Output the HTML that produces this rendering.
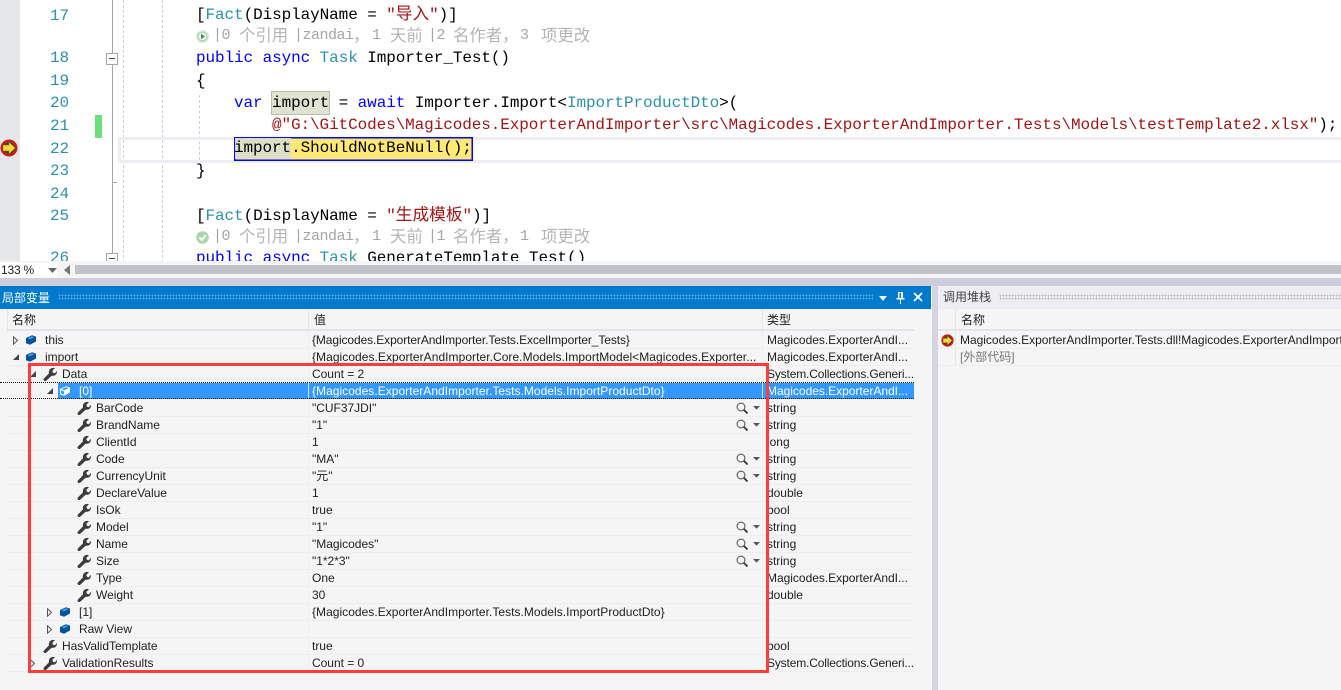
<!DOCTYPE html>
<html><head><meta charset="utf-8"><style>
html,body{margin:0;padding:0;width:1341px;height:690px;overflow:hidden;background:#f5f5f5}
body{position:relative;font-family:"Liberation Sans","Noto Sans CJK SC",sans-serif;font-size:12px;color:#1e1e1e}
div,span.a,svg.a{position:absolute}
#ed{left:0;top:0;width:1341px;height:263px;background:#fff;overflow:hidden;font-family:"Liberation Mono","Noto Sans CJK SC",monospace;font-size:16px;letter-spacing:-.09px;color:#000}
.n{left:50px;color:#2b91af;height:22px;line-height:22px;white-space:pre}
.c{height:22px;line-height:22px;white-space:pre}
.k{color:#00f}.t{color:#2b91af}.s{color:#a31515}.j{font-size:16.7px;letter-spacing:0}
.l{color:#a5a5a5;font-size:15px;letter-spacing:-.5px;height:20px;line-height:20px;white-space:pre}
.j2{font-size:16.4px;letter-spacing:0;color:#b5b5b5}
.r{left:7px;width:907px;height:17px;border-bottom:1px solid #eeeeee;box-sizing:border-box}
.x{height:17px;line-height:16px;white-space:pre;letter-spacing:-.02px}
.v{left:312px}.y{left:767px}
.sep{width:1px;background:#e6e6ea}
</style></head><body>
<svg width="0" height="0" style="position:absolute"><defs>
<symbol id="w" viewBox="0 0 14 14"><path fill="#3c3c3c" d="M.8 11.6 6 6.4C5.4 4 6.8.9 10.2.9c.7 0 1.2.1 1.7.4L9.3 3.9l.7 1.8 1.8.7 2.1-2.5c.5 3.200-2 5.400-5.300 4.800L3.200 13.700c-.6.600-1.500.500-2.100 0-.7-.6-.8-1.500-.3-2.100z"/></symbol>
<symbol id="b" viewBox="0 0 12 12"><path fill="#00539c" d="M1 4 7 1.200 11 2.600V7.500L5 10.800 1 9.200z"/><path fill="#5a9bd0" d="M2.600 4.300 7 2.300 9.500 3.100 5 5.200z"/></symbol>
<symbol id="bs" viewBox="0 0 12 12"><path fill="#fff" d="M1 4 7 1.200 11 2.600V7.500L5 10.800 1 9.200z"/><path fill="#3399ff" d="M2 5.300 5 6.500V9.500L2 8.400zM2.600 4.100 7 2.200 9.600 3.100 5 5.300z"/></symbol>
<symbol id="m" viewBox="0 0 25 12"><circle cx="5" cy="5" r="3.900" fill="none" stroke="#666" stroke-width="1.200"/><path d="M7.800 7.800 11.500 11.500" stroke="#333" stroke-width="1.800"/><path d="M17 4h7l-3.500 3.600z" fill="#555"/></symbol>
<symbol id="o" viewBox="0 0 7 9"><path d="M1.500 .8 5.500 4.500 1.500 8.200z" fill="#f5f5f5" stroke="#555"/></symbol>
<symbol id="d" viewBox="0 0 8 8"><path d="M7 1V7H1z" fill="#444"/></symbol>
<symbol id="bp" viewBox="0 0 18 18"><circle cx="9" cy="9" r="8.500" fill="#d81818"/><circle cx="9" cy="9" r="6.500" fill="#6d3a20"/><path d="M2.800 6H8.800V2.800L15.500 9 8.800 15.200V12H2.800z" fill="#f6d838" stroke="#6a5518" stroke-width=".6"/></symbol>
</defs></svg>

<div id="ed">
<div style="left:0;top:0;width:20px;height:263px;background:#e6e7e8"></div>
<div style="left:95px;top:115px;width:7px;height:23px;background:#6be07a"></div>
<div style="left:112px;top:0;width:1px;height:263px;background:#a5a5a5"></div>
<div style="left:112px;top:182px;width:5px;height:1px;background:#a5a5a5"></div>
<div style="left:123px;top:0;height:263px;width:0;border-left:1px dashed #d0d0d0"></div>
<div style="left:162px;top:0;height:263px;width:0;border-left:1px dashed #d0d0d0"></div>
<div style="left:199px;top:95px;height:65px;width:0;border-left:1px dashed #d0d0d0"></div>
<div style="left:106px;top:53px;width:10px;height:10px;border:1px solid #a5a5a5;background:#fff"><div style="left:2px;top:4px;width:6px;height:1px;background:#444"></div></div>
<div style="left:106px;top:253px;width:10px;height:10px;border:1px solid #a5a5a5;background:#fff"><div style="left:2px;top:4px;width:6px;height:1px;background:#444"></div></div>
<div style="left:118px;top:137px;width:1223px;height:20px;border:3px solid #eeeef2;border-right:0"></div>
<div style="left:271px;top:91px;width:57px;height:22px;background:#dfe3d0;border:1px solid #b8bca8"></div>
<div style="left:234px;top:137px;width:237px;height:22px;background:#fee972;border:1px solid #0000ff;box-shadow:inset 0 0 0 .5px #0000ff"></div>
<div style="left:235px;top:138px;width:56px;height:21px;background:#dcdfc5"></div>
<svg class="a" style="left:0;top:139px" width="18" height="18"><use href="#bp"/></svg>

<div class="n" style="top:5px">17</div>
<div class="n" style="top:47px">18</div>
<div class="n" style="top:70px">19</div>
<div class="n" style="top:92px">20</div>
<div class="n" style="top:115px">21</div>
<div class="n" style="top:138px">22</div>
<div class="n" style="top:160px">23</div>
<div class="n" style="top:183px">24</div>
<div class="n" style="top:205px">25</div>
<div class="n" style="top:247px">26</div>

<div class="c" style="left:196px;top:4px">[<span class="t">Fact</span>(DisplayName = <span class="s">"<span class="j">导入</span>"</span>)]</div>
<svg class="a" style="left:196px;top:30px" width="13" height="13"><circle cx="6.500" cy="6.500" r="6.300" fill="#cfe5d3"/><circle cx="6.500" cy="6.500" r="4.300" fill="#fff" stroke="#a9cdb0"/><path d="M5 3.600 9.200 6.500 5 9.400z" fill="#3f9a52"/></svg>
<span class="a l" style="left:213px;top:26px">|0</span><span class="a l j2" style="left:239px;top:27px">个引用</span><span class="a l" style="left:294px;top:26px">|zandai</span><span class="a l j2" style="left:353px;top:27px">，</span><span class="a l" style="left:372px;top:26px">1</span><span class="a l j2" style="left:390px;top:27px">天前</span><span class="a l" style="left:428px;top:26px">|2</span><span class="a l j2" style="left:453px;top:27px">名作者，</span><span class="a l" style="left:520px;top:26px">3</span><span class="a l j2" style="left:541px;top:27px">项更改</span>
<div class="c" style="left:196px;top:47px"><span class="k">public</span> <span class="k">async</span> <span class="t">Task</span> Importer_Test()</div>
<div class="c" style="left:196px;top:70px">{</div>
<div class="c" style="left:234px;top:92px"><span class="k">var</span> import = <span class="k">await</span> Importer.Import&lt;<span class="t">ImportProductDto</span>&gt;(</div>
<div class="c s" style="left:272px;top:114px">@"G:\GitCodes\Magicodes.ExporterAndImporter\src\Magicodes.ExporterAndImporter.Tests\Models\testTemplate2.xlsx"<span style="color:#000">);</span></div>
<div class="c" style="left:234px;top:137px">import.ShouldNotBeNull();</div>
<div class="c" style="left:196px;top:160px">}</div>
<div class="c" style="left:196px;top:205px">[<span class="t">Fact</span>(DisplayName = <span class="s">"<span class="j">生成模板</span>"</span>)]</div>
<svg class="a" style="left:196px;top:231px" width="13" height="13"><circle cx="6.500" cy="6.500" r="6.300" fill="#a9d6ad"/><path d="M3.500 6.500 5.800 9 9.800 4.200" fill="none" stroke="#fff" stroke-width="1.800"/></svg>
<span class="a l" style="left:213px;top:227px">|0</span><span class="a l j2" style="left:239px;top:228px">个引用</span><span class="a l" style="left:294px;top:227px">|zandai</span><span class="a l j2" style="left:353px;top:228px">，</span><span class="a l" style="left:372px;top:227px">1</span><span class="a l j2" style="left:390px;top:228px">天前</span><span class="a l" style="left:428px;top:227px">|1</span><span class="a l j2" style="left:453px;top:228px">名作者，</span><span class="a l" style="left:520px;top:227px">1</span><span class="a l j2" style="left:541px;top:228px">项更改</span>
<div class="c" style="left:196px;top:247px"><span class="k">public</span> <span class="k">async</span> <span class="t">Task</span> GenerateTemplate_Test()</div>
</div>

<!-- scrollbar -->
<div style="left:0;top:261px;width:1341px;height:17px;background:#f5f5f5"></div>
<div style="left:0;top:263px;width:57px;height:15px;background:#fff"></div>
<div class="x" style="left:1px;top:262px;height:16px;line-height:17px;letter-spacing:-.2px">133 %</div>
<svg class="a" style="left:48px;top:268px" width="9" height="5"><path d="M0 0h9L4.500 5z" fill="#666"/></svg>
<svg class="a" style="left:64px;top:265px" width="6" height="10"><path d="M6 0V10L0 5z" fill="#777"/></svg>
<div style="left:75px;top:265px;width:1266px;height:9px;background:#c2c3c9"></div>
<div style="left:0;top:278px;width:1341px;height:8px;background:#cccedb"></div>

<!-- locals panel -->
<div style="left:0;top:286px;width:931px;height:404px;background:#f5f5f5"></div>
<div style="left:0;top:286px;width:931px;height:23px;background:#007acc"></div>
<div style="left:2px;top:287px;height:23px;line-height:23px;color:#fff;font-size:12px;white-space:pre">局部变量</div>
<div style="left:58px;top:294px;width:815px;height:6px;background-image:radial-gradient(circle,#5aa9de .9px,transparent 1px);background-size:3px 3px"></div>
<svg class="a" style="left:878px;top:296px" width="10" height="5"><path d="M1 0h8L5 5z" fill="#fff"/></svg>
<svg class="a" style="left:896px;top:291px" width="9" height="13"><path d="M2 1h5v6h1.500v1.500H5V13H4V8.500H.5V7H2zM3.500 2v5H5V2z" fill="#fff"/></svg>
<svg class="a" style="left:913px;top:292px" width="10" height="10"><path d="M1 1 9 9M9 1 1 9" stroke="#fff" stroke-width="1.800"/></svg>

<!-- header -->
<div style="left:7px;top:329px;width:907px;height:2px;background:#e3e4ea"></div>
<div class="sep" style="left:7px;top:309px;height:21px"></div>
<div class="sep" style="left:308px;top:309px;height:21px"></div>
<div class="sep" style="left:762px;top:309px;height:21px"></div>
<div class="x" style="left:12px;top:312px">名称</div>
<div class="x" style="left:314px;top:312px">值</div>
<div class="x" style="left:767px;top:312px">类型</div>
<div class="sep" style="left:308px;top:331px;height:339px;background:#eeeeee"></div>
<div class="sep" style="left:762px;top:331px;height:339px;background:#eeeeee"></div>

<!-- row lines -->
<div class="r" style="top:332px"></div><div class="r" style="top:349px"></div><div class="r" style="top:366px"></div><div class="r" style="top:400px"></div><div class="r" style="top:417px"></div><div class="r" style="top:434px"></div><div class="r" style="top:451px"></div><div class="r" style="top:468px"></div><div class="r" style="top:485px"></div><div class="r" style="top:502px"></div><div class="r" style="top:519px"></div><div class="r" style="top:536px"></div><div class="r" style="top:553px"></div><div class="r" style="top:570px"></div><div class="r" style="top:587px"></div><div class="r" style="top:604px"></div><div class="r" style="top:621px"></div><div class="r" style="top:638px"></div><div class="r" style="top:655px"></div>

<!-- selected -->
<div style="left:58px;top:383px;width:856px;height:16px;background:#3399ff"></div>
<div style="left:0;top:382px;width:914px;height:0;border-top:1px dotted #111"></div>
<div style="left:0;top:398px;width:914px;height:0;border-top:1px dotted #111"></div>
<div style="left:308px;top:383px;width:1px;height:15px;background:#cfe5ff"></div>
<div style="left:762px;top:383px;width:1px;height:15px;background:#cfe5ff"></div>

<!-- arrows and icons -->
<svg class="a" style="left:12px;top:336px" width="7" height="9"><use href="#o"/></svg>
<svg class="a" style="left:12px;top:353px" width="8" height="8"><use href="#d"/></svg>
<svg class="a" style="left:29px;top:370px" width="8" height="8"><use href="#d"/></svg>
<svg class="a" style="left:46px;top:387px" width="8" height="8"><use href="#d"/></svg>
<svg class="a" style="left:46px;top:608px" width="7" height="9"><use href="#o"/></svg>
<svg class="a" style="left:46px;top:625px" width="7" height="9"><use href="#o"/></svg>
<svg class="a" style="left:29px;top:659px" width="7" height="9"><use href="#o"/></svg>
<svg class="a" style="left:25px;top:334px" width="12" height="12"><use href="#b"/></svg>
<svg class="a" style="left:25px;top:351px" width="12" height="12"><use href="#b"/></svg>
<svg class="a" style="left:59px;top:385px" width="12" height="12"><use href="#bs"/></svg>
<svg class="a" style="left:59px;top:606px" width="12" height="12"><use href="#b"/></svg>
<svg class="a" style="left:59px;top:623px" width="12" height="12"><use href="#b"/></svg>
<svg class="a" style="left:43px;top:367px" width="14" height="14"><use href="#w"/></svg>
<svg class="a" style="left:43px;top:639px" width="14" height="14"><use href="#w"/></svg>
<svg class="a" style="left:43px;top:656px" width="14" height="14"><use href="#w"/></svg>
<svg class="a" style="left:77px;top:401px" width="14" height="14"><use href="#w"/></svg>
<svg class="a" style="left:77px;top:418px" width="14" height="14"><use href="#w"/></svg>
<svg class="a" style="left:77px;top:435px" width="14" height="14"><use href="#w"/></svg>
<svg class="a" style="left:77px;top:452px" width="14" height="14"><use href="#w"/></svg>
<svg class="a" style="left:77px;top:469px" width="14" height="14"><use href="#w"/></svg>
<svg class="a" style="left:77px;top:486px" width="14" height="14"><use href="#w"/></svg>
<svg class="a" style="left:77px;top:503px" width="14" height="14"><use href="#w"/></svg>
<svg class="a" style="left:77px;top:520px" width="14" height="14"><use href="#w"/></svg>
<svg class="a" style="left:77px;top:537px" width="14" height="14"><use href="#w"/></svg>
<svg class="a" style="left:77px;top:554px" width="14" height="14"><use href="#w"/></svg>
<svg class="a" style="left:77px;top:571px" width="14" height="14"><use href="#w"/></svg>
<svg class="a" style="left:77px;top:588px" width="14" height="14"><use href="#w"/></svg>
<svg class="a" style="left:736px;top:402px" width="25" height="12"><use href="#m"/></svg>
<svg class="a" style="left:736px;top:419px" width="25" height="12"><use href="#m"/></svg>
<svg class="a" style="left:736px;top:453px" width="25" height="12"><use href="#m"/></svg>
<svg class="a" style="left:736px;top:470px" width="25" height="12"><use href="#m"/></svg>
<svg class="a" style="left:736px;top:521px" width="25" height="12"><use href="#m"/></svg>
<svg class="a" style="left:736px;top:538px" width="25" height="12"><use href="#m"/></svg>
<svg class="a" style="left:736px;top:555px" width="25" height="12"><use href="#m"/></svg>

<!-- names -->
<div class="x" style="left:45px;top:332px">this</div>
<div class="x" style="left:45px;top:349px">import</div>
<div class="x" style="left:62px;top:366px">Data</div>
<div class="x" style="left:79px;top:383px;color:#fff">[0]</div>
<div class="x" style="left:96px;top:400px">BarCode</div>
<div class="x" style="left:96px;top:417px">BrandName</div>
<div class="x" style="left:96px;top:434px">ClientId</div>
<div class="x" style="left:96px;top:451px">Code</div>
<div class="x" style="left:96px;top:468px">CurrencyUnit</div>
<div class="x" style="left:96px;top:485px">DeclareValue</div>
<div class="x" style="left:96px;top:502px">IsOk</div>
<div class="x" style="left:96px;top:519px">Model</div>
<div class="x" style="left:96px;top:536px">Name</div>
<div class="x" style="left:96px;top:553px">Size</div>
<div class="x" style="left:96px;top:570px">Type</div>
<div class="x" style="left:96px;top:587px">Weight</div>
<div class="x" style="left:79px;top:604px">[1]</div>
<div class="x" style="left:79px;top:621px">Raw View</div>
<div class="x" style="left:62px;top:638px">HasValidTemplate</div>
<div class="x" style="left:62px;top:655px">ValidationResults</div>

<!-- values -->
<div class="x v" style="top:332px;letter-spacing:-.1px">{Magicodes.ExporterAndImporter.Tests.ExcelImporter_Tests}</div>
<div class="x v" style="top:349px;letter-spacing:.05px">{Magicodes.ExporterAndImporter.Core.Models.ImportModel&lt;Magicodes.Exporter...</div>
<div class="x v" style="top:366px">Count = 2</div>
<div class="x v" style="top:383px;color:#fff;letter-spacing:.03px">{Magicodes.ExporterAndImporter.Tests.Models.ImportProductDto}</div>
<div class="x v" style="top:400px">"CUF37JDI"</div>
<div class="x v" style="top:417px">"1"</div>
<div class="x v" style="top:434px">1</div>
<div class="x v" style="top:451px">"MA"</div>
<div class="x v" style="top:468px">"元"</div>
<div class="x v" style="top:485px">1</div>
<div class="x v" style="top:502px">true</div>
<div class="x v" style="top:519px">"1"</div>
<div class="x v" style="top:536px">"Magicodes"</div>
<div class="x v" style="top:553px">"1*2*3"</div>
<div class="x v" style="top:570px">One</div>
<div class="x v" style="top:587px">30</div>
<div class="x v" style="top:604px;letter-spacing:.03px">{Magicodes.ExporterAndImporter.Tests.Models.ImportProductDto}</div>
<div class="x v" style="top:638px">true</div>
<div class="x v" style="top:655px">Count = 0</div>

<!-- types -->
<div class="x y" style="top:332px">Magicodes.ExporterAndI...</div>
<div class="x y" style="top:349px">Magicodes.ExporterAndI...</div>
<div class="x y" style="top:366px;letter-spacing:-.16px">System.Collections.Generi...</div>
<div class="x y" style="top:383px;color:#fff">Magicodes.ExporterAndI...</div>
<div class="x y" style="top:400px">string</div>
<div class="x y" style="top:417px">string</div>
<div class="x y" style="top:434px">long</div>
<div class="x y" style="top:451px">string</div>
<div class="x y" style="top:468px">string</div>
<div class="x y" style="top:485px">double</div>
<div class="x y" style="top:502px">bool</div>
<div class="x y" style="top:519px">string</div>
<div class="x y" style="top:536px">string</div>
<div class="x y" style="top:553px">string</div>
<div class="x y" style="top:570px">Magicodes.ExporterAndI...</div>
<div class="x y" style="top:587px">double</div>
<div class="x y" style="top:638px">bool</div>
<div class="x y" style="top:655px;letter-spacing:-.16px">System.Collections.Generi...</div>

<!-- red box -->
<div style="left:28px;top:363px;width:735px;height:304px;border:3px solid #ff3b3b"></div>

<!-- splitter + call stack -->
<div style="left:931px;top:286px;width:1px;height:404px;background:#f5f5f5"></div>
<div style="left:932px;top:286px;width:6px;height:404px;background:#d4d5e0"></div>
<div style="left:938px;top:286px;width:403px;height:404px;background:#f5f5f5"></div>
<div style="left:938px;top:286px;width:403px;height:23px;background:#eeeef2"></div>
<div class="x" style="left:943px;top:289px;color:#444">调用堆栈</div>
<div style="left:999px;top:294px;width:342px;height:6px;background-image:radial-gradient(circle,#bdbdc2 .9px,transparent 1px);background-size:3px 3px"></div>
<div style="left:938px;top:329px;width:403px;height:2px;background:#e3e4ea"></div>
<div class="sep" style="left:955px;top:309px;height:56px"></div>
<div class="x" style="left:961px;top:312px">名称</div>
<div style="left:938px;top:348px;width:403px;height:1px;background:#eeeeee"></div>
<div style="left:938px;top:365px;width:403px;height:1px;background:#eeeeee"></div>
<svg class="a" style="left:941px;top:334px" width="13" height="13"><use href="#bp"/></svg>
<div class="x" style="left:960px;top:332px;width:381px;overflow:hidden">Magicodes.ExporterAndImporter.Tests.dll!Magicodes.ExporterAndImporter.Tests</div>
<div class="x" style="left:960px;top:349px;color:#777">[外部代码]</div>
</body></html>
